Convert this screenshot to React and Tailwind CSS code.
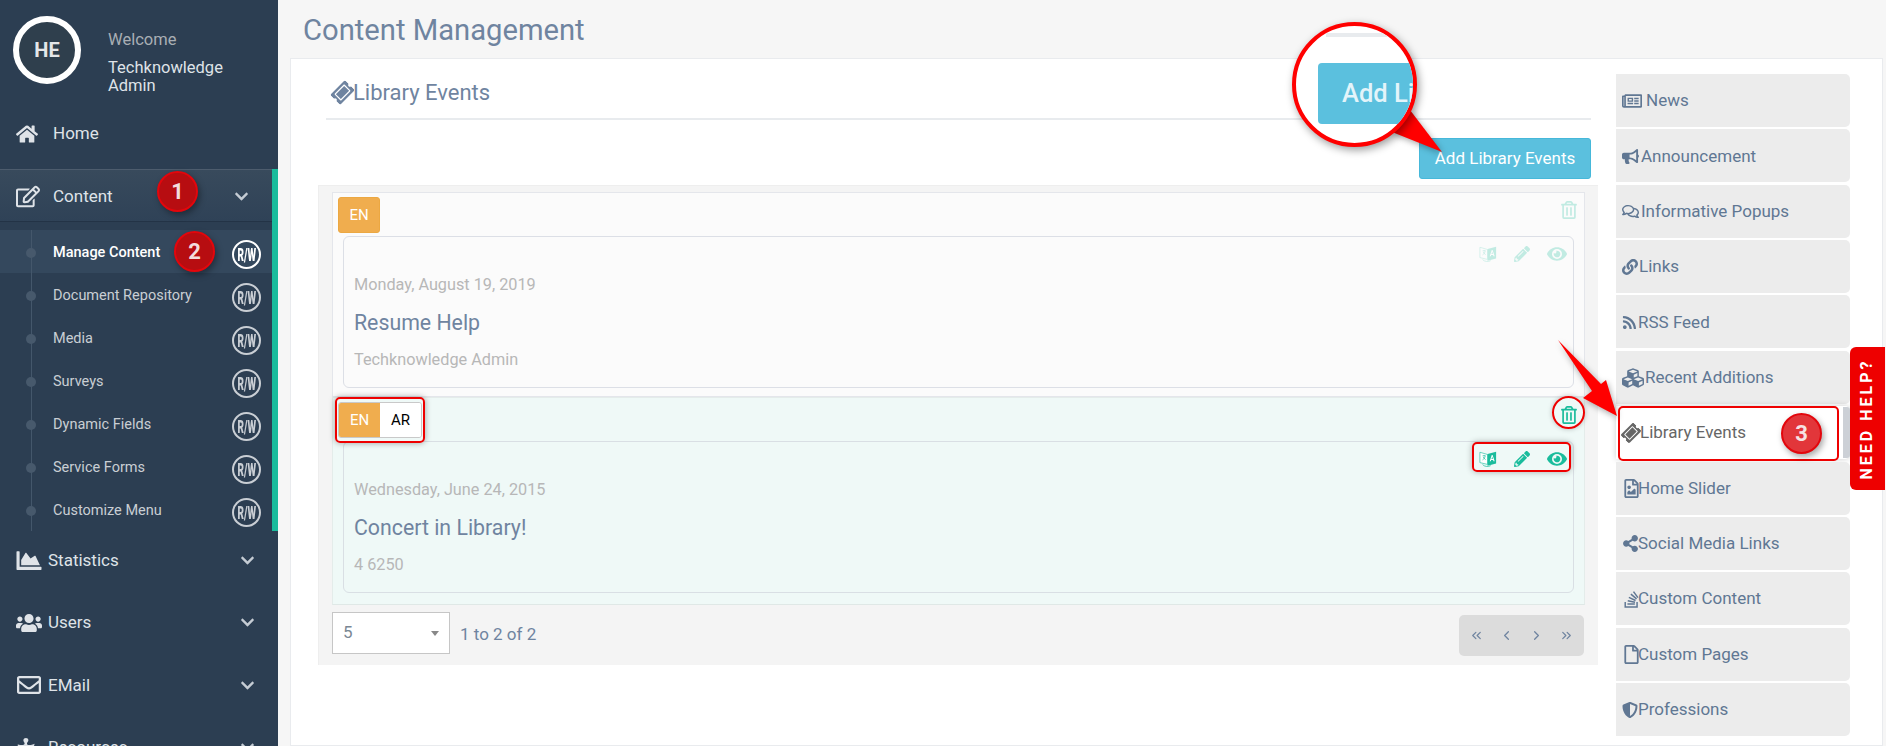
import {
  FaHome, FaRegEdit, FaChevronDown, FaChartArea, FaUsers, FaRegEnvelope, FaPuzzlePiece,
  FaRegNewspaper, FaBullhorn, FaRegComments, FaLink, FaRss, FaCubes, FaTicketAlt,
  FaRegFileImage, FaShareAlt, FaStackOverflow, FaRegFile, FaShieldAlt, FaPencilAlt, FaEye,
  FaRegTrashAlt,
} from "react-icons/fa";
import { ChevronLeft, ChevronRight, ChevronsLeft, ChevronsRight } from "lucide-react";

const subItems = ["Manage Content", "Document Repository", "Media", "Surveys", "Dynamic Fields", "Service Forms", "Customize Menu"];

const tabs = [
  { label: "News", icon: FaRegNewspaper, size: 20, shift: "ml-[3px]" },
  { label: "Announcement", icon: FaBullhorn, size: 17, shift: "ml-[1px]" },
  { label: "Informative Popups", icon: FaRegComments, size: 17, shift: "ml-[1px]" },
  { label: "Links", icon: FaLink, size: 16 },
  { label: "RSS Feed", icon: FaRss, size: 15 },
  { label: "Recent Additions", icon: FaCubes, size: 22 },
  { label: "Library Events", icon: FaTicketAlt, active: true, size: 18, shift: "-ml-[1px]" },
  { label: "Home Slider", icon: FaRegFileImage, size: 19, shift: "-ml-[4px]" },
  { label: "Social Media Links", icon: FaShareAlt, size: 17, shift: "-ml-[2px]" },
  { label: "Custom Content", icon: FaStackOverflow, size: 19, shift: "-ml-[4px]" },
  { label: "Custom Pages", icon: FaRegFile, size: 19, shift: "-ml-[4px]" },
  { label: "Professions", icon: FaShieldAlt, size: 16, shift: "-ml-[1px]" },
];

function LangIcon() {
  return (
    <svg viewBox="0 0 20 20" width="18" height="20" fill="currentColor">
      <path d="M1 2.5 9.5 5v11L1 14z" fill="#ffffff" stroke="currentColor" strokeWidth="0.7" />
      <path d="M9.5 4.5 19 2v13l-9.500 2.500z" />
      <path d="M4 6.500h3.500M5.700 5.500v1M6.800 7c-.5 2-1.500 3.200-2.800 4M4.800 7.800c.5 1.200 1.300 2.200 2.500 2.800" fill="none" stroke="currentColor" strokeWidth="0.8" />
      <path d="M14.200 5.500h.9l2.300 7h-1.300l-.4-1.400h-2.200l-.4 1.400h-1.200zM14.700 7.300l-.8 2.800h1.500z" fill="#ffffff" />
      <path d="M4 16.200c2 2.300 6 2.800 9 1.200" fill="none" stroke="currentColor" strokeWidth="0.8" />
    </svg>
  );
}

function NavRow({ icon: Icon, label, size = 22 }) {
  return (
    <div className="flex h-[62.500px] shrink-0 items-center pl-[16px] pr-[23px] text-[#dfe3e8]">
      <div className="flex flex-1 items-center">
        <Icon size={size} className="mr-[6px] w-[26px] shrink-0" />
        <span className="text-[17px]">{label}</span>
      </div>
      <FaChevronDown size={15} className="text-[#c5ccd4]" />
    </div>
  );
}

function RowIcons({ faded }) {
  return (
    <div className={`-mr-[4px] flex h-[34px] items-center justify-end gap-[17px] text-[#1abc9c] ${faded ? "opacity-25" : ""}`}>
      <LangIcon />
      <FaPencilAlt size={16} />
      <FaEye size={20} />
    </div>
  );
}

function Badge({ n, className }) {
  return (
    <div className={`absolute flex h-[41px] w-[41px] items-center justify-center rounded-full border-2 border-[#e3060c] bg-[#b70d11] text-[22px] font-bold text-[#f3dcdc] shadow-[2px_3px_6px_rgba(0,0,0,0.35)] ${className}`}>
      {n}
    </div>
  );
}

export default function App() {
  return (
    <div className="relative flex h-[746px] w-[1886px] overflow-hidden bg-[#f6f6f6] font-['Roboto',sans-serif]">
      {/* sidebar */}
      <aside className="flex w-[278px] shrink-0 flex-col overflow-hidden bg-[#2c3e52]">
        <div className="flex h-[110px] shrink-0 pl-[13px] pt-[16px]">
          <div className="flex h-[68px] w-[68px] items-center justify-center rounded-full border-[6px] border-white bg-[#2f3f4d] text-[20px] font-bold text-[#e4e6e8]">
            HE
          </div>
          <div className="ml-[27px] text-[16.500px] text-[#dfe3e8]">
            <div className="mt-[12px] text-[#a9aeb4]">Welcome</div>
            <div className="mt-[6px] leading-[18px]">Techknowledge<br />Admin</div>
          </div>
        </div>
        <div className="flex h-[59px] shrink-0 items-center pb-[11px] pl-[16px] text-[#dfe3e8]">
          <FaHome size={22} className="w-[22px]" />
          <span className="ml-[15px] text-[17px]">Home</span>
        </div>
        <div className="flex h-[362px] shrink-0 flex-col border-r-[6px] border-[#1abc9c]">
          <div className="flex h-[55px] items-center border-y border-t-[#4d5c6d] border-b-[#233346] bg-[linear-gradient(#384a5c,#2f4257)] pl-[16px] pr-[18px] pt-[2px] text-[#dfe3e8]">
            <FaRegEdit size={23} className="w-[24px]" />
            <span className="ml-[13px] flex-1 text-[17px]">Content</span>
            <FaChevronDown size={15} className="mr-[5px] text-[#c5ccd4]" />
          </div>
          <div className="relative flex flex-col pt-[8px]">
            <div className="absolute bottom-0 left-[31px] top-[8px] w-px bg-[#44576b]" />
            {subItems.map((item, i) => (
              <div key={item} className={`flex h-[43px] items-center pl-[26px] pr-[11px] ${i === 0 ? "bg-[#34485d] font-medium text-white" : "text-[#c9ced4]"}`}>
                <span className="relative mt-[2px] h-[10px] w-[10px] shrink-0 rounded-full bg-[#47596c]" />
                <span className="ml-[17px] flex-1 pt-[2px] text-[14.500px]">{item}</span>
                <span className={`mt-[6px] flex h-[29px] w-[29px] shrink-0 items-center justify-center rounded-full border-2 ${i === 0 ? "border-white" : "border-[#c9ced4]"}`}>
                  <span className="scale-x-[0.55] text-[18px] font-black whitespace-nowrap">R/W</span>
                </span>
              </div>
            ))}
          </div>
        </div>
        <div className="-mt-[2px]">
          <NavRow icon={FaChartArea} label="Statistics" size={25} />
          <NavRow icon={FaUsers} label="Users" size={24} />
          <NavRow icon={FaRegEnvelope} label="EMail" size={24} />
          <NavRow icon={FaPuzzlePiece} label="Resources" size={20} />
        </div>
      </aside>

      {/* main */}
      <main className="flex min-w-0 flex-1 flex-col pl-[12px] pr-[3px]">
        <h1 className="flex h-[58px] shrink-0 items-center pl-[13px] pt-[4px] text-[29.200px] font-normal text-[#6f84a0]">Content Management</h1>
        <div className="flex flex-1 border border-[#e9ebee] bg-white">
          <section className="w-[1325px] shrink-0">
            <div className="ml-[35px] mr-[25px]">
              <div className="flex h-[61px] items-center border-b-2 border-[#e8ebee] pl-[6px] pt-[8px] text-[22px] text-[#6f84a0]">
                <FaTicketAlt size={21} className="-rotate-45" />
                <span>Library Events</span>
              </div>
              <div className="flex justify-end pt-[18px]">
                <button className="flex h-[41px] w-[172px] items-center justify-center rounded-[3px] border border-[#46b8da] bg-[#5bc0de] text-[17px] text-white">
                  Add Library Events
                </button>
              </div>
            </div>
            <div className="ml-[27px] mr-[18px] mt-[6px] flex h-[480px] flex-col border-l border-t border-[#eeeeee] bg-[#f4f4f4] pl-[13px] pr-[13px] pt-[6px]">
              <div className="h-[205px] shrink-0 border border-[#e4e6eb] bg-[#fbfbfb] pl-[5px] pr-[10px] pt-[4px]">
                <div className="flex h-[39px] items-start justify-between">
                  <span className="flex h-[36px] w-[42px] items-center justify-center rounded-[3px] border border-[#eca842] bg-[#f0ad4e] text-[15px] text-white">EN</span>
                  <FaRegTrashAlt size={18} className="-mr-[4px] mt-[4px] text-[#1abc9c] opacity-25" />
                </div>
                <div className="ml-[5px] h-[152px] rounded-[6px] border border-[#dcdfe6] px-[10px]">
                  <RowIcons faded />
                  <div className="mt-[2px] text-[16.250px] text-[#b7b7b7]">Monday, August 19, 2019</div>
                  <div className="mt-[10px] text-[21.300px] text-[#6f84a0]">Resume Help</div>
                  <div className="mt-[9px] text-[16.250px] text-[#b7b7b7]">Techknowledge Admin</div>
                </div>
              </div>
              <div className="h-[208px] shrink-0 border border-[#e4ecea] border-b-[#dfe8e6] bg-[#eff9f7] pl-[5px] pr-[10px] pt-[4px]">
                <div className="flex h-[39px] items-start justify-between">
                  <span className="flex h-[36px] overflow-hidden rounded-[3px] border border-[#c9c9c9] text-[15px]">
                    <span className="flex w-[41px] items-center justify-center bg-[#f0ad4e] text-white">EN</span>
                    <span className="flex w-[41px] items-center justify-center bg-white text-black">AR</span>
                  </span>
                  <FaRegTrashAlt size={18} className="-mr-[4px] mt-[4px] text-[#1abc9c]" />
                </div>
                <div className="ml-[5px] h-[152px] rounded-[6px] border border-[#d9dfe4] px-[10px]">
                  <RowIcons />
                  <div className="mt-[2px] text-[16.250px] text-[#b7b7b7]">Wednesday, June 24, 2015</div>
                  <div className="mt-[10px] text-[21.300px] text-[#6f84a0]">Concert in Library!</div>
                  <div className="mt-[9px] text-[16.250px] text-[#b7b7b7]">4 6250</div>
                </div>
              </div>
              <div className="mt-[7px] flex items-start justify-between pr-[1px]">
                <div className="flex items-center">
                  <div className="flex h-[42px] w-[118px] items-center justify-between border border-[#c6c6c6] bg-white pl-[10px] pr-[10px] text-[17px] text-[#7a8794]">
                    <span>5</span>
                    <span className="h-0 w-0 border-x-[4px] border-t-[5px] border-x-transparent border-t-[#888888]" />
                  </div>
                  <span className="ml-[10px] pt-[3px] text-[17px] text-[#6f84a0]">1 to 2 of 2</span>
                </div>
                <div className="mt-[3px] flex h-[41px] w-[125px] items-center justify-between rounded-[5px] bg-[#dcdcdc] px-[10px] text-[#6f84a0]">
                  <ChevronsLeft size={15} strokeWidth={2} />
                  <ChevronLeft size={15} strokeWidth={2} />
                  <ChevronRight size={15} strokeWidth={2} />
                  <ChevronsRight size={15} strokeWidth={2} />
                </div>
              </div>
            </div>
          </section>

          {/* tab column */}
          <nav className="mt-[15px] flex w-[234px] shrink-0 flex-col gap-[2.360px]">
            {tabs.map(({ label, icon: Icon, active, size, shift }) => (
              <div key={label} className={`flex h-[53px] shrink-0 items-center gap-[1px] rounded-r-[5px] pl-[6px] pt-[1px] text-[17px] ${active ? "bg-white text-[#666666] shadow-[0_0_6px_rgba(0,0,0,0.2)]" : "bg-[#ececec] text-[#607793]"}`}>
                <Icon size={size} className={`shrink-0 ${active ? "-rotate-45" : ""}`} />
                <span className={shift}>{label}</span>
              </div>
            ))}
          </nav>
        </div>
      </main>

      {/* help tab */}
      <div className="absolute left-[1850px] top-[347px] flex h-[143px] w-[35px] items-center justify-center rounded-l-[6px] bg-[#ee0000]">
        <span className="-rotate-90 whitespace-nowrap text-[16px] font-bold tracking-[3px] text-white">NEED HELP?</span>
      </div>

      {/* annotations */}
      <svg className="pointer-events-none absolute left-0 top-0" width="1886" height="746" style={{ filter: "drop-shadow(1px 2px 3px rgba(0,0,0,0.35))" }}>
        <polygon points="1410,110 1442,152 1392,132" fill="#ff0000" />
        <polygon points="1558,340 1601,384 1606,380 1617,416 1583,398 1592,391" fill="#ff0000" />
      </svg>
      <div className="absolute left-[1292px] top-[22px] h-[125px] w-[125px] overflow-hidden rounded-full border-4 border-[#ff0000] bg-white shadow-[2px_3px_8px_rgba(0,0,0,0.4)]">
        <div className="absolute left-[30px] top-[7px] h-[4px] w-[100px] bg-[#e8ebee]" />
        <div className="absolute left-[22px] top-[37px] flex h-[61px] w-[120px] items-center rounded-[4px] bg-[#5bc0de] pl-[24px] text-[25.500px] font-medium whitespace-nowrap text-[#e3f4fa]">
          Add Li
        </div>
      </div>
      <div className="absolute left-[335px] top-[397px] h-[46px] w-[90px] rounded-[5px] border-2 border-[#ee0000] shadow-[0_0_6px_rgba(0,0,0,0.35)]" />
      <div className="absolute left-[1552px] top-[396px] h-[33px] w-[33px] rounded-full border-2 border-[#ee0000] shadow-[0_0_5px_rgba(0,0,0,0.25)]" />
      <div className="absolute left-[1472px] top-[442px] h-[30px] w-[99px] rounded-[5px] border-2 border-[#ee0000] shadow-[0_0_6px_rgba(0,0,0,0.3)]" />
      <div className="absolute left-[1618px] top-[406px] h-[55px] w-[221px] rounded-[5px] border-2 border-[#ee0000]" />
      <div className="absolute left-[1843px] top-[407px] h-[51px] w-[7px] rounded-r-[3px] bg-[#ccd0d6]" />
      <Badge n="1" className="left-[157px] top-[171px]" />
      <Badge n="2" className="left-[174px] top-[231px]" />
      <Badge n="3" className="left-[1781px] top-[413px] !bg-[#e2363a] !text-[#f6e2e2]" />
    </div>
  );
}
